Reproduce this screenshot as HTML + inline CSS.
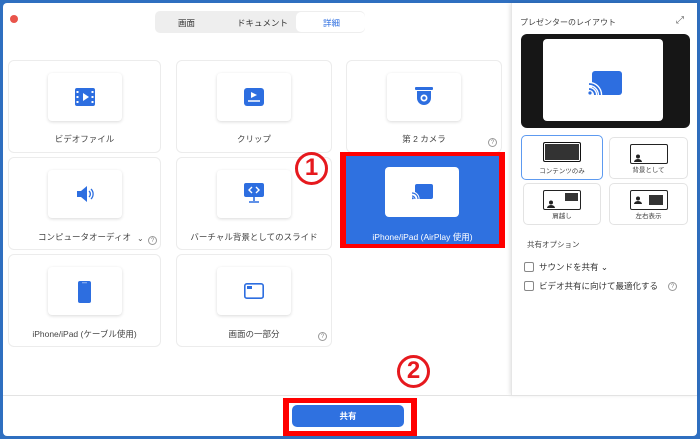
<!DOCTYPE html><html><head><meta charset="utf-8"><style>
*{box-sizing:border-box;margin:0;padding:0}
body{width:700px;height:439px;background:#2f6fc0;font-family:"Liberation Sans","Noto Sans CJK JP",sans-serif;position:relative;overflow:hidden}
.win{position:absolute;left:3px;top:3px;width:694px;height:433px;background:#fff;border-radius:4px}
.a{position:absolute}
.card{position:absolute;background:#fff;border:1px solid #ececec;border-radius:6px}
.tile{position:absolute;left:50%;margin-left:-37px;top:12px;width:74px;height:48px;background:#fff;border-radius:4px;box-shadow:0 1px 3px rgba(0,0,0,.15)}
.lbl{position:absolute;left:0;right:0;top:72px;text-align:center;font-size:8.5px;color:#444}
.q{position:absolute;width:9px;height:9px;border:1px solid #999;border-radius:50%;font-size:6px;color:#888;text-align:center;line-height:8px}
.lb{position:absolute;border:1px solid #e3e3e3;border-radius:5px;background:#fff}
.lb .s{position:absolute;left:50%;margin-left:-19px;top:6px;width:38px;height:20px;border:1.5px solid #222;border-radius:2px;background:#fff}
.lb .t{position:absolute;left:0;right:0;bottom:4px;text-align:center;font-size:6.5px;color:#444}
.cb{position:absolute;width:10px;height:10px;border:1px solid #888;border-radius:2px;background:#fff}
.num{position:absolute;width:33px;height:33px;border:3.5px solid #e6191e;border-radius:50%;color:#e6191e;font-weight:bold;font-size:24px;text-align:center;line-height:26px;font-family:"Liberation Sans",sans-serif;background:#fff}
</style></head><body>
<div class="win">
<div class="a" style="left:7px;top:12px;width:8px;height:8px;border-radius:50%;background:#e9544b"></div>
<div class="a" style="left:152px;top:8px;width:210px;height:22px;background:#eeeeee;border-radius:5px"></div>
<div class="a" style="left:293px;top:9px;width:69px;height:20px;background:#fff;border-radius:5px"></div>
<div class="a" style="left:175px;top:14px;font-size:8.5px;color:#333">画面</div>
<div class="a" style="left:234px;top:14px;font-size:8.5px;color:#333">ドキュメント</div>
<div class="a" style="left:320px;top:14px;font-size:8.5px;color:#2d6ee0">詳細</div>

<div class="card" style="left:5px;top:57px;width:153px;height:93px"><div class="tile"><svg class="a" style="left:27px;top:15px" width="20" height="18"><rect width="20" height="18" rx="2" fill="#2d6ee0"/><path d="M8 5l6 4-6 4z" fill="#fff"/><g fill="#fff"><rect x="1.5" y="3" width="2" height="2"/><rect x="1.5" y="8" width="2" height="2"/><rect x="1.5" y="13" width="2" height="2"/><rect x="16.5" y="3" width="2" height="2"/><rect x="16.5" y="8" width="2" height="2"/><rect x="16.5" y="13" width="2" height="2"/></g></svg></div><div class="lbl">ビデオファイル</div></div>
<div class="card" style="left:173px;top:57px;width:156px;height:93px"><div class="tile"><svg class="a" style="left:27px;top:15px" width="20" height="18"><rect width="20" height="18" rx="3" fill="#2d6ee0"/><path d="M7 4l6 3-6 3z" fill="#fff"/><path d="M4 13h12" stroke="#fff" stroke-width="1.5"/></svg></div><div class="lbl">クリップ</div></div>
<div class="card" style="left:343px;top:57px;width:156px;height:93px"><div class="tile"><svg class="a" style="left:28px;top:14px" width="18" height="20"><rect x="0" y="0" width="18" height="3" rx="1" fill="#2d6ee0"/><path d="M2 4h14v7a7 7 0 0 1-14 0z" fill="#2d6ee0"/><circle cx="9" cy="11" r="3.5" fill="#fff"/><circle cx="9" cy="11" r="1.8" fill="#2d6ee0"/></svg></div><div class="lbl">第 2 カメラ</div><div class="q" style="left:141px;top:77px">?</div></div>

<div class="card" style="left:5px;top:154px;width:153px;height:93px"><div class="tile"><svg class="a" style="left:27px;top:14px" width="20" height="20"><path d="M2 7h4l6-5v16l-6-5H2z" fill="#2d6ee0"/><path d="M14 7a4 4 0 0 1 0 6M16 5a7 7 0 0 1 0 10" stroke="#2d6ee0" fill="none" stroke-width="1.3"/></svg></div><div class="lbl" style="top:73px">コンピュータオーディオ</div><div class="a" style="left:128px;top:76px;font-size:8px;color:#555">⌄</div><div class="q" style="left:139px;top:78px">?</div></div>
<div class="card" style="left:173px;top:154px;width:156px;height:93px"><div class="tile"><svg class="a" style="left:27px;top:13px" width="20" height="20"><rect x="0" y="0" width="20" height="14" rx="2" fill="#2d6ee0"/><path d="M8 4l-3 3 3 3M12 4l3 3-3 3" stroke="#fff" fill="none" stroke-width="1.4"/><path d="M10 14v4M5 19h10" stroke="#2d6ee0" stroke-width="1.6"/></svg></div><div class="lbl" style="top:73px">バーチャル背景としてのスライド</div></div>
<div class="a" style="left:337px;top:149px;width:165px;height:96px;background:#f00"></div>
<div class="a" style="left:343px;top:153px;width:153px;height:88px;background:#2f71e0"></div>
<div class="a" style="left:382px;top:164px;width:74px;height:50px;background:#fff;border-radius:4px"><svg class="a" style="left:27px;top:17px" width="21" height="16"><rect x="3" y="0" width="18" height="15" rx="2" fill="#2d6ee0"/><path d="M0 9a6 6 0 0 1 6 6M0 12a3 3 0 0 1 3 3" stroke="#fff" stroke-width="3.2" fill="none"/><path d="M0 9a6 6 0 0 1 6 6M0 12a3 3 0 0 1 3 3" stroke="#2d6ee0" stroke-width="1.2" fill="none"/><circle cx="0.8" cy="14.2" r="1" fill="#2d6ee0"/></svg></div>
<div class="a" style="left:343px;top:228px;width:153px;text-align:center;font-size:8.5px;color:#fff">iPhone/iPad (AirPlay 使用)</div>
<div class="num" style="left:292px;top:149px">1</div>

<div class="card" style="left:5px;top:251px;width:153px;height:93px"><div class="tile"><svg class="a" style="left:30px;top:14px" width="13" height="22"><rect width="13" height="22" rx="2" fill="#2d6ee0"/><rect x="4" y="1" width="5" height="1.3" fill="#7ea6ee"/></svg></div><div class="lbl" style="top:73px">iPhone/iPad (ケーブル使用)</div></div>
<div class="card" style="left:173px;top:251px;width:156px;height:93px"><div class="tile"><svg class="a" style="left:27px;top:16px" width="20" height="16"><rect x="0.8" y="0.8" width="18.4" height="14.4" rx="2" fill="#fff" stroke="#2d6ee0" stroke-width="1.6"/><rect x="3" y="3" width="5" height="3" fill="#2d6ee0"/></svg></div><div class="lbl" style="top:73px">画面の一部分</div><div class="q" style="left:141px;top:77px">?</div></div>
<div class="num" style="left:394px;top:352px">2</div>

<div class="a" style="left:508px;top:0;width:186px;height:392px;background:#fff;box-shadow:-1px 0 4px rgba(0,0,0,.12);border-left:1px solid #e6e6e6"></div>
<div class="a" style="left:517px;top:14px;font-size:8px;color:#444">プレゼンターのレイアウト</div>
<div class="a" style="left:673px;top:12px;font-size:10px;color:#666">⤢</div>
<div class="a" style="left:518px;top:31px;width:169px;height:94px;background:#161616;border-radius:6px"></div>
<div class="a" style="left:540px;top:36px;width:120px;height:82px;background:#fff;border-radius:4px"></div>
<svg class="a" style="left:585px;top:65px" width="34" height="27"><rect x="4" y="3" width="30" height="24" rx="3" fill="#2d6ee0"/><path d="M1 16a11 11 0 0 1 11 11M1 21a6 6 0 0 1 6 6" stroke="#fff" stroke-width="4.5" fill="none"/><path d="M1 16a11 11 0 0 1 11 11M1 21a6 6 0 0 1 6 6" stroke="#2d6ee0" stroke-width="1.8" fill="none"/><circle cx="2" cy="25" r="1.6" fill="#2d6ee0"/></svg>
<div class="lb" style="left:518px;top:132px;width:82px;height:45px;border:1.3px solid #5d9af0"><div class="s" style="background:#333;border-color:#111;box-shadow:inset 0 0 0 1px #fff"></div><div class="t">コンテンツのみ</div></div>
<div class="lb" style="left:606px;top:134px;width:79px;height:42px"><div class="s"><svg class="a" style="left:3px;top:9px" width="8" height="8"><circle cx="4" cy="2.5" r="2" fill="#222"/><path d="M0 8a4 3 0 0 1 8 0z" fill="#222"/></svg></div><div class="t">背景として</div></div>
<div class="lb" style="left:520px;top:180px;width:78px;height:42px"><div class="s"><svg class="a" style="left:3px;top:9px" width="8" height="8"><circle cx="4" cy="2.5" r="2" fill="#222"/><path d="M0 8a4 3 0 0 1 8 0z" fill="#222"/></svg><div class="a" style="left:21px;top:2px;width:13px;height:8px;background:#333"></div></div><div class="t">肩越し</div></div>
<div class="lb" style="left:606px;top:180px;width:79px;height:42px"><div class="s"><svg class="a" style="left:3px;top:5px" width="8" height="8"><circle cx="4" cy="2.5" r="2" fill="#222"/><path d="M0 8a4 3 0 0 1 8 0z" fill="#222"/></svg><div class="a" style="left:18px;top:4px;width:14px;height:10px;background:#333"></div></div><div class="t">左右表示</div></div>
<div class="a" style="left:524px;top:236px;font-size:7.5px;color:#444">共有オプション</div>
<div class="cb" style="left:521px;top:259px"></div><div class="a" style="left:536px;top:258px;font-size:8.5px;color:#333">サウンドを共有 ⌄</div>
<div class="cb" style="left:521px;top:278px"></div><div class="a" style="left:536px;top:277px;font-size:8.5px;color:#333">ビデオ共有に向けて最適化する</div><div class="q" style="left:665px;top:279px">?</div>

<div class="a" style="left:0;top:392px;width:694px;height:1px;background:#e3e3e3"></div>
<div class="a" style="left:280px;top:395px;width:134px;height:38px;background:#f00"></div>
<div class="a" style="left:286px;top:400px;width:122px;height:28px;background:#fff"></div>
<div class="a" style="left:289px;top:402px;width:112px;height:22px;background:#2f71e0;border-radius:5px;color:#fff;font-size:8.5px;font-weight:bold;text-align:center;line-height:22px">共有</div>
</div>
</body></html>
